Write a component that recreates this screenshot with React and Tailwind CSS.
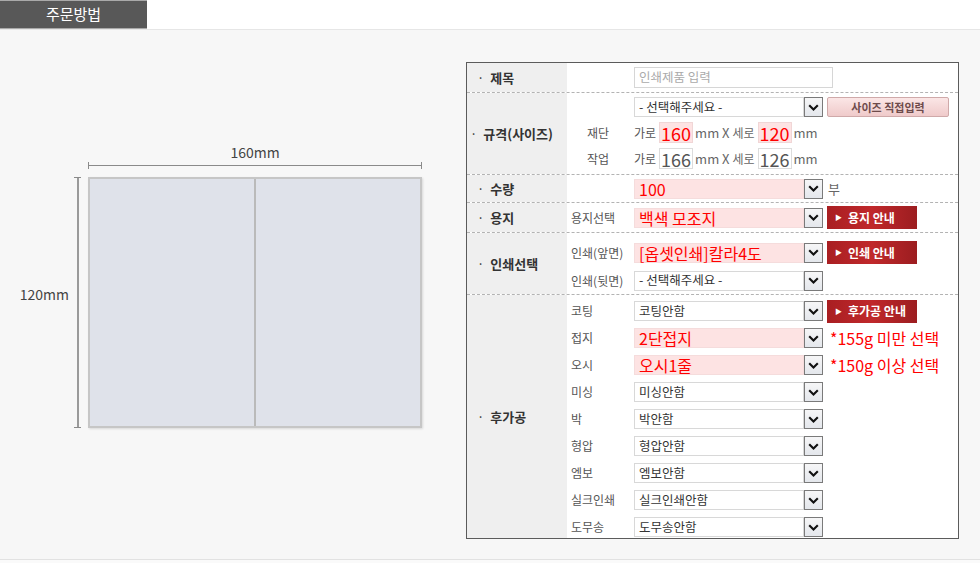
import React from 'react';

const font = "font-['Noto_Sans_CJK_KR','Noto_Sans',sans-serif]";

// small black chevron used in every select box
const Chevron = () => (
  <svg width="11" height="7" viewBox="0 0 11 7">
    <path d="M1.2 1.2 L5.5 5.5 L9.8 1.2" fill="none" stroke="#111" strokeWidth="2.1" />
  </svg>
);

function Select({ text, pink }) {
  return (
    <div className="flex h-[20px] w-[189px] shrink-0">
      <div
        className={`flex-1 flex items-center pl-[4px] border leading-none whitespace-nowrap ${
          pink
            ? 'bg-[#fde3e3] border-[#f5dcdc] text-[16px] text-[#ff0000]'
            : 'bg-white border-[#d8d8d8] text-[12.5px] text-[#333]'
        }`}
      >
        {text}
      </div>
      <div className="w-[19px] h-[20px] flex items-center justify-center border border-[#7a7a7a] bg-linear-to-b from-[#f6f6f7] to-[#e4e7ec]">
        <Chevron />
      </div>
    </div>
  );
}

function RedBtn({ children }) {
  return (
    <div className="ml-[4px] w-[90px] h-[23px] flex items-center pl-[8px] gap-[6px] bg-linear-to-r from-[#a91f22] via-[#c0282b] to-[#9c1d20] text-white text-[12px] font-bold whitespace-nowrap">
      <span className="text-[7px] leading-none">▶</span>
      {children}
    </div>
  );
}

function SizeBox({ v, pink }) {
  return (
    <div
      className={`w-[34px] h-[21px] border flex items-center justify-center text-[18px] leading-none ${
        pink ? 'bg-[#fde3e3] border-[#f0d6d6] text-[#ff0000]' : 'bg-white border-[#dcdcdc] text-[#555]'
      }`}
    >
      {v}
    </div>
  );
}

function Sub({ children, indent }) {
  return (
    <div className={`w-[67px] shrink-0 text-[12px] text-[#555] whitespace-nowrap ${indent ? 'pl-[20px]' : 'pl-[4px]'}`}>
      {children}
    </div>
  );
}

function Row({ label, h, first, lp = 'pl-[10px]', children }) {
  return (
    <div className={`flex ${h} ${first ? '' : 'border-t border-dashed border-[#b3b3b3]'}`}>
      <div className={`w-[100px] shrink-0 bg-[#efefef] flex items-center gap-[6px] ${lp} text-[13px] font-bold text-[#333]`}>
        <span className="font-normal">·</span>
        {label}
      </div>
      <div className="flex-1">{children}</div>
    </div>
  );
}

const finishing = [
  ['코팅', '코팅안함', false, 'btn'],
  ['접지', '2단접지', true, '*155g 미만 선택'],
  ['오시', '오시1줄', true, '*150g 이상 선택'],
  ['미싱', '미싱안함'],
  ['박', '박안함'],
  ['형압', '형압안함'],
  ['엠보', '엠보안함'],
  ['실크인쇄', '실크인쇄안함'],
  ['도무송', '도무송안함'],
];

export default function App() {
  return (
    <div className={`w-[980px] h-[563px] bg-[#fafafa] flex flex-col overflow-hidden ${font}`}>
      {/* title strip */}
      <div className="h-[30px] bg-white border-b border-[#e6e6e6] flex shrink-0">
        <div className="w-[147px] h-[29px] bg-[#585858] border-y border-[#a9a9a9] flex items-center justify-center text-white text-[15px]">
          주문방법
        </div>
      </div>

      <div className="h-[530px] bg-[#f7f7f7] border-b border-[#e2e2e2] flex shrink-0">
        {/* diagram */}
        <div className="w-[466px] shrink-0 pt-[113px]">
          <div className="grid grid-cols-[88px_334px]">
            <div />
            <div className="flex flex-col h-[34px]">
              <div className="h-[19px] leading-[19px] text-center text-[14px] text-[#444]">160mm</div>
              <div className="h-[7px] border-x border-[#8a8a8a] flex items-center">
                <div className="h-px w-full bg-[#8a8a8a]" />
              </div>
            </div>
            <div className="flex justify-end pr-[7px]">
              <div className="self-center mb-[16px] mr-[5px] text-[14px] text-[#444]">120mm</div>
              <div className="w-[7px] border-y border-[#8a8a8a] flex justify-center">
                <div className="w-[2px] bg-[#9a9a9a]" />
              </div>
            </div>
            <div className="h-[251px] border-2 border-[#c6c6c6] bg-[#dfe2ea] flex shadow-[1px_1px_2px_rgba(0,0,0,0.12)]">
              <div className="flex-1 border-r-2 border-[#bababa]" />
              <div className="flex-1" />
            </div>
          </div>
        </div>

        {/* order table */}
        <div className="pt-[32px]">
          <div className="w-[493px] bg-white border border-[#5b5b5b] flex flex-col">
            <Row label="제목" h="h-[29px]" first>
              <div className="h-full flex items-center pl-[67px]">
                <div className="w-[199px] h-[21px] border border-[#d6d6d6] flex items-center pl-[4px] text-[12.5px] text-[#aaa]">
                  인쇄제품 입력
                </div>
              </div>
            </Row>

            <Row label="규격(사이즈)" h="h-[82px]" lp="pl-[3px]">
              <div className="flex flex-col pt-[4px] gap-[5px]">
                <div className="flex items-center pl-[67px]">
                  <Select text="- 선택해주세요 -" />
                  <div className="ml-[4px] w-[122px] h-[20px] rounded-[2px] border border-[#cfa9a9] bg-linear-to-b from-[#fbe6e6] to-[#efcaca] flex items-center justify-center text-[11px] font-bold text-[#6e4b4b]">
                    사이즈 직접입력
                  </div>
                </div>
                {[
                  ['재단', '160', '120', true],
                  ['작업', '166', '126', false],
                ].map(([s, a, b, pink]) => (
                  <div key={s} className="flex items-center h-[21px] text-[13px] text-[#666]">
                    <Sub indent>{s}</Sub>
                    <span className="text-[12px] text-[#555]">가로</span>
                    <div className="ml-[3px]"><SizeBox v={a} pink={pink} /></div>
                    <span className="ml-[2px]">mm X <span className="text-[12px]">세로</span></span>
                    <div className="ml-[3px]"><SizeBox v={b} pink={pink} /></div>
                    <span className="ml-[2px]">mm</span>
                  </div>
                ))}
              </div>
            </Row>

            <Row label="수량" h="h-[28px]">
              <div className="h-full flex items-center pl-[67px]">
                <Select text="100" pink />
                <span className="ml-[5px] text-[13px] text-[#666]">부</span>
              </div>
            </Row>

            <Row label="용지" h="h-[30px]">
              <div className="h-full flex items-center">
                <Sub>용지선택</Sub>
                <Select text="백색 모조지" pink />
                <RedBtn>용지 안내</RedBtn>
              </div>
            </Row>

            <Row label="인쇄선택" h="h-[62px]">
              <div className="flex flex-col pt-[8px] gap-[6px]">
                <div className="flex items-center h-[23px]">
                  <Sub>인쇄(앞면)</Sub>
                  <Select text="[옵셋인쇄]칼라4도" pink />
                  <RedBtn>인쇄 안내</RedBtn>
                </div>
                <div className="flex items-center h-[21px]">
                  <Sub>인쇄(뒷면)</Sub>
                  <Select text="- 선택해주세요 -" />
                </div>
              </div>
            </Row>

            <Row label="후가공" h="h-[244px]">
              <div className="flex flex-col">
                {finishing.map(([s, v, pink, extra]) => (
                  <div key={s} className="h-[27px] pt-[6px]">
                    <div className="flex items-center h-[20px]">
                      <Sub>{s}</Sub>
                      <Select text={v} pink={pink} />
                      {extra === 'btn' && <RedBtn>후가공 안내</RedBtn>}
                      {extra && extra !== 'btn' && (
                        <span className="ml-[7px] text-[16px] text-[#ff0000] whitespace-nowrap">{extra}</span>
                      )}
                    </div>
                  </div>
                ))}
              </div>
            </Row>
          </div>
        </div>
      </div>
    </div>
  );
}
